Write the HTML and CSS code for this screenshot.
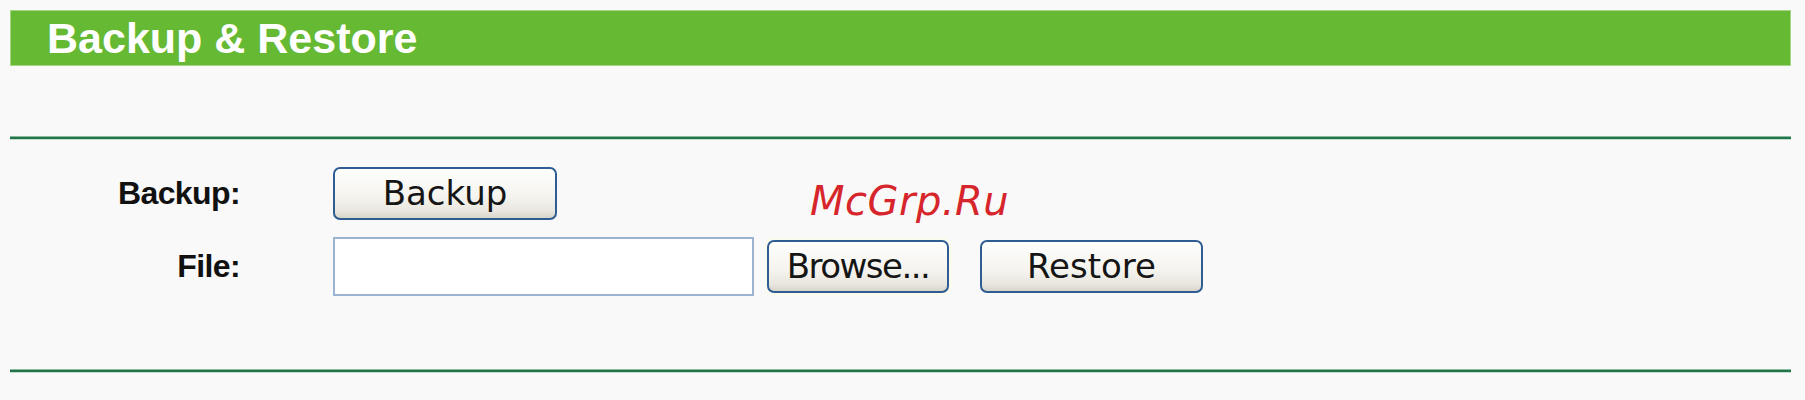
FILE: index.html
```html
<!DOCTYPE html>
<html lang="en">
<head>
<meta charset="utf-8">
<title>Backup &amp; Restore</title>
<link rel="stylesheet" href="styles.css">
</head>
<body>
<div class="panel">
  <div class="title-bar">Backup &amp; Restore</div>
  <div class="rule rule-top"></div>
  <form class="form-grid">
    <label class="field-label">Backup:</label>
    <div class="controls">
      <button type="button" class="btn btn-backup">Backup</button>
    </div>
    <label class="field-label">File:</label>
    <div class="controls">
      <input type="text" class="file-input">
      <button type="button" class="btn btn-browse">Browse...</button>
      <button type="button" class="btn btn-restore">Restore</button>
    </div>
  </form>
  <div class="rule rule-bottom"></div>
  <div class="watermark">McGrp.Ru</div>
</div>
</body>
</html>
```

FILE: styles.css
```css
html, body {
  margin: 0;
  padding: 0;
  background: #f9f9f9;
}

.panel {
  position: relative;
  margin: 10px 14px 0 10px;
}

.title-bar {
  box-sizing: border-box;
  height: 56px;
  background: #66b933;
  border: 1px solid #a4d686;
  padding-left: 36px;
  color: #ffffff;
  font-family: "Liberation Sans", Arial, sans-serif;
  font-weight: bold;
  font-size: 43px;
  line-height: 54px;
}

.rule {
  height: 2px;
  background: #23744a;
  border-top: 1px solid #86bb9b;
  border-bottom: 1px solid #c2ddcc;
}

.rule-top {
  margin-top: 70px;
}

.form-grid {
  display: grid;
  grid-template-columns: 230px 1fr;
  column-gap: 93px;
  row-gap: 17px;
  align-items: center;
  margin: 27px 0 0 0;
}

.field-label {
  text-align: right;
  font-family: "Liberation Sans", Arial, sans-serif;
  font-weight: bold;
  font-size: 32px;
  letter-spacing: -0.6px;
  color: #111111;
}

.controls {
  display: flex;
  align-items: center;
}

.btn {
  box-sizing: border-box;
  height: 53px;
  padding: 0;
  border: 2px solid #2f5d93;
  border-radius: 7px;
  background: linear-gradient(#fefefd 0%, #f5f4ef 55%, #e9e7df 85%, #d8d5ca 100%);
  font-family: "DejaVu Sans", Verdana, sans-serif;
  font-size: 34px;
  color: #151515;
  line-height: 47px;
}

.btn-backup {
  width: 224px;
}

.file-input {
  box-sizing: border-box;
  width: 421px;
  height: 59px;
  margin: 0;
  border: 2px solid #9bb3cf;
  background: #ffffff;
  outline: none;
}

.btn-browse {
  width: 182px;
  margin-left: 13px;
  letter-spacing: -1.5px;
  box-shadow: 0 0 0 3px #fbfaee;
}

.btn-restore {
  width: 223px;
  margin-left: 31px;
}

.rule-bottom {
  margin-top: 73px;
}

.watermark {
  position: absolute;
  left: 800px;
  top: 171px;
  font-family: "DejaVu Sans", Verdana, sans-serif;
  font-style: italic;
  font-size: 40px;
  line-height: 40px;
  letter-spacing: 0.5px;
  color: #d6252b;
}
```
